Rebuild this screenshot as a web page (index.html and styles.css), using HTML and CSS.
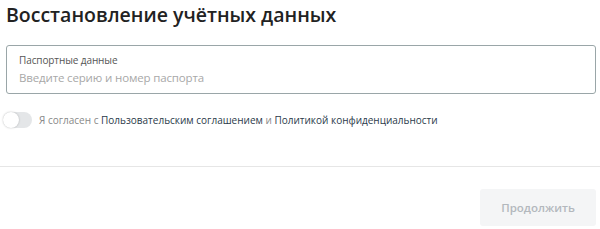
FILE: index.html
```html
<!DOCTYPE html>
<html>
<head>
    <meta charset="UTF-8">
    <title>Восстановление учётных данных</title>
    <link rel="stylesheet" href="styles.css">
</head>
<body>
    <div class="form">
        <h1>Восстановление учётных данных</h1>
        <label class="field">
            <span class="field-label">Паспортные данные</span>
            <input type="text" placeholder="Введите серию и номер паспорта">
        </label>
        <div class="agree">
            <span class="toggle"><span class="knob"></span></span>
            <span class="agree-text">Я согласен с <a href="#">Пользовательским соглашением</a> и <a href="#">Политикой конфиденциальности</a></span>
        </div>
    </div>
    <div class="footer">
        <button class="btn" disabled>Продолжить</button>
    </div>
</body>
</html>
```

FILE: styles.css
```css
body {
    font-family: "Open Sans", Arial, sans-serif;
    margin: 0;
    padding: 0;
    background-color: #fff;
    color: #222;
}
.form {
    padding: 0 4px 0 6px;
    border-bottom: 1px solid #e6e6e6;
    height: 166px;
}
h1 {
    font-size: 19.5px;
    font-weight: 600;
    margin: 0;
    padding-top: 0;
    line-height: 30px;
    color: #222;
}
.field {
    display: flex;
    flex-direction: column;
    margin-top: 15px;
    height: 47px;
    border: 1px solid #9aa6a8;
    border-radius: 3px;
    padding: 0 12px;
}
.field-label {
    font-size: 10px;
    letter-spacing: -0.1px;
    color: #555;
    margin-top: 7px;
    line-height: 14px;
}
.field input {
    border: none;
    outline: none;
    padding: 0;
    margin-top: 3px;
    font-family: inherit;
    font-size: 11.5px;
    letter-spacing: -0.15px;
    color: #222;
}
.field input::placeholder {
    color: #a8a8a8;
}
.agree {
    display: flex;
    align-items: center;
    margin-top: 18px;
    margin-left: -3px;
}
.toggle {
    width: 29px;
    height: 16px;
    border-radius: 8px;
    background-color: #e4e6e8;
    display: inline-block;
    position: relative;
    margin-right: 7px;
}
.knob {
    position: absolute;
    left: 0;
    top: 0;
    width: 16px;
    height: 16px;
    border-radius: 50%;
    background-color: #fff;
    box-shadow: 0 0 2px rgba(0, 0, 0, 0.25);
}
.agree-text {
    font-size: 10px;
    color: #888;
}
.agree-text a {
    color: #2b3a4a;
    text-decoration: none;
}
.footer {
    display: flex;
    justify-content: flex-end;
    padding: 22px 4px 0 0;
}
.btn {
    width: 116px;
    height: 37px;
    border: none;
    border-radius: 3px;
    background-color: #f4f5f6;
    color: #b3b8bd;
    font-family: inherit;
    font-size: 11.5px;
    font-weight: 600;
}
```
